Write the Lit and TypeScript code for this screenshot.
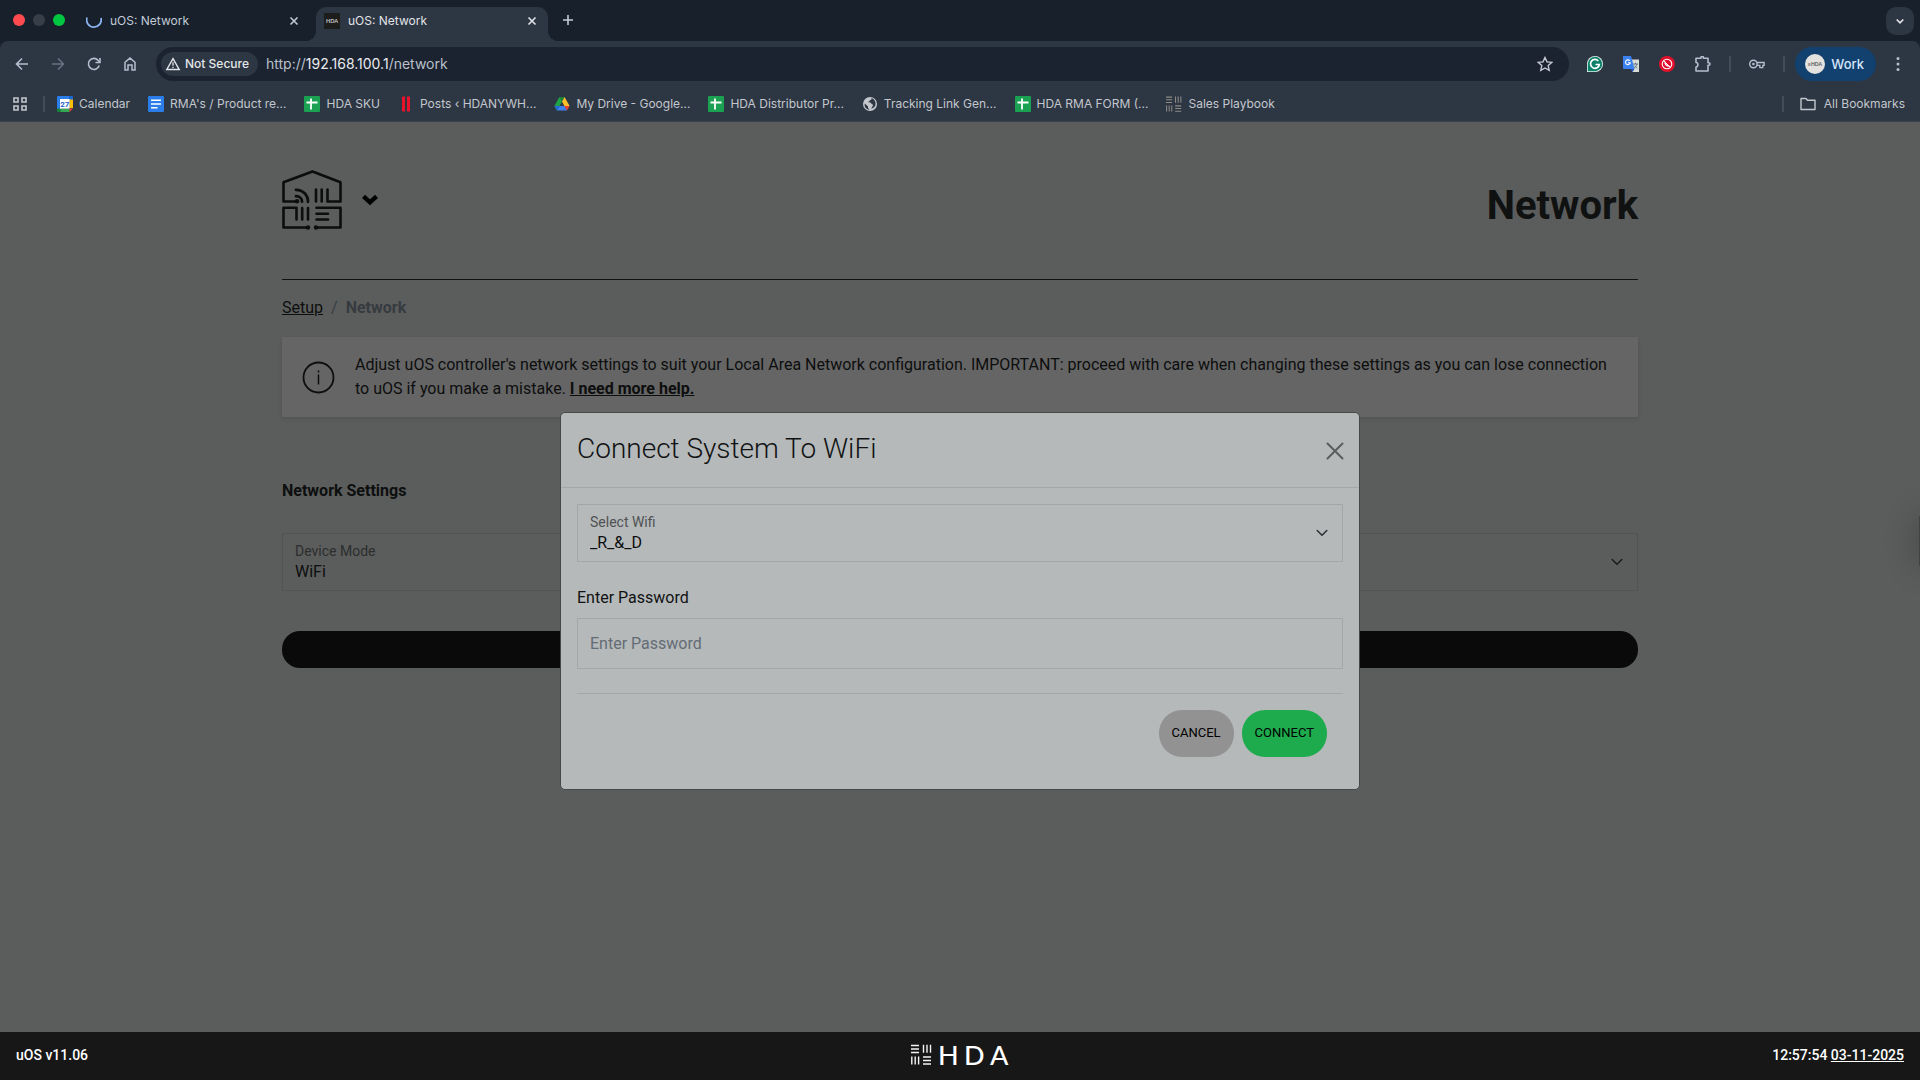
import { LitElement, html, css, svg } from "lit";
import { customElement, state } from "lit/decorators.js";

const sheetIcon = html`<svg class="ico" viewBox="0 0 16 16" aria-hidden="true">
  <rect width="16" height="16" rx="1" fill="#1ba152"/>
  <path d="M7 2.500v11M2.500 6.500h11" stroke="#fff" stroke-width="1.800"/>
</svg>`;

const barsMark = (color: string) => svg`
  <g stroke=${color} stroke-width="1.400" fill="none">
    <path d="M0 1.500h8M0 5h8M0 8.500h8"/>
    <path d="M12.500 .8v8M16 .8v8M19.500 .8v8"/>
    <path d="M.8 12.500v8M4.200 12.500v8M7.600 12.500v8"/>
    <path d="M12 13h8M12 16.500h8M12 20h8"/>
  </g>`;

const calendarIcon = html`<svg class="ico" viewBox="0 0 16 16" aria-hidden="true">
  <path d="M1 0h11v4H4v9H0V1a1 1 0 0 1 1-1z" fill="#2b7de9"/>
  <path d="M12 0h3a1 1 0 0 1 1 1v3h-4z" fill="#1967d2"/>
  <path d="M12.500 3.500H16V12h-3.500z" fill="#fbbc04"/>
  <path d="M3 12.500h9.500V16H4a1 1 0 0 1-1-1z" fill="#34a853"/>
  <path d="M0 12.500h3.500V16H1a1 1 0 0 1-1-1z" fill="#188038"/>
  <path d="M12.500 12.500H16L12.500 16z" fill="#ea4335"/>
  <rect x="3" y="3" width="9.600" height="9.600" fill="#fff"/>
  <text x="7.800" y="10.600" text-anchor="middle" font-family="Roboto, sans-serif" font-size="8" font-weight="700" fill="#1a5fc8">27</text>
</svg>`;

const docIcon = html`<svg class="ico" viewBox="0 0 16 16" aria-hidden="true">
  <rect width="16" height="16" rx="1" fill="#2b7de9"/>
  <path d="M3 4.300h10M3 8h10M3 11.700h6.500" stroke="#fff" stroke-width="1.600"/>
</svg>`;

const pauseIcon = html`<svg class="ico" viewBox="0 0 16 16" aria-hidden="true">
  <path d="M5.500 .5v15M10.500 .5v15" stroke="#e8132b" stroke-width="3"/>
</svg>`;

const driveIcon = html`<svg class="ico" viewBox="0 0 16 16" aria-hidden="true">
  <path d="M5.400 1h5.200L8 5.500z" fill="#188038"/>
  <path d="M5.400 1L8 5.500 3 14.500.4 10z" fill="#1ea446"/>
  <path d="M10.600 1L15.600 10h-5.200L8 5.500z" fill="#fcbf2a"/>
  <path d="M5.600 10h4.800l2.600 4.500H3z" fill="#3b82f0"/>
  <path d="M10.400 10h5.200L13 14.500z" fill="#ea4335"/>
  <path d="M.4 10h5.200L3 14.500z" fill="#2567d8"/>
</svg>`;

const globeIcon = html`<svg class="ico" viewBox="0 0 16 16" aria-hidden="true">
  <circle cx="8" cy="8" r="7" fill="#c4c7cb"/>
  <path d="M2.800 7.500L6 10.500v1.500l1.500 1.800C4 13.500 2 10.500 2.800 7.500zM9.500 2c.5 1.200-.5 2-1.600 2.200C7.500 5.500 6.500 5.500 6 6.300c1.500 0 3.200.2 3.500 1.700 1.500.3 1.800 1.200 1.200 2.200-.7.800-1.200 1.300-1.200 2.600 3-.8 4.500-3.200 4-6C13 4.300 11.500 2.600 9.500 2z" fill="#2d3643"/>
</svg>`;

const playbookIcon = html`<svg class="ico" viewBox="0 0 21 21" aria-hidden="true">${barsMark("#8d8a86")}</svg>`;

interface Bookmark { label: string; icon: unknown; }

const bookmarks: Bookmark[] = [
  { label: "Calendar", icon: calendarIcon },
  { label: "RMA's / Product re...", icon: docIcon },
  { label: "HDA SKU", icon: sheetIcon },
  { label: "Posts ‹ HDANYWH...", icon: pauseIcon },
  { label: "My Drive - Google...", icon: driveIcon },
  { label: "HDA Distributor Pr...", icon: sheetIcon },
  { label: "Tracking Link Gen...", icon: globeIcon },
  { label: "HDA RMA FORM (...", icon: sheetIcon },
  { label: "Sales Playbook", icon: playbookIcon },
];

const closeGlyph = html`<svg class="ico" viewBox="0 0 16 16" aria-hidden="true">
  <path d="M4.500 4.500l7 7M11.500 4.500l-7 7" stroke="currentColor" stroke-width="1.600" fill="none"/>
</svg>`;

@customElement("browser-chrome")
export class BrowserChrome extends LitElement {
  static styles = css`
    :host { display: block; background: #17202b; color: #c3cbd8; font: 12px/16px Inter, "Liberation Sans", sans-serif; }
    button { font: inherit; color: inherit; background: none; border: 0; padding: 0; display: grid; place-items: center; cursor: pointer; }
    a { color: inherit; text-decoration: none; }
    svg { display: block; }
    .ico { width: 16px; height: 16px; flex: none; }
    .tabs { display: flex; align-items: end; height: 41px; padding: 0 6px 0 13px; box-sizing: border-box; }
    .lights { display: flex; gap: 8px; height: 42px; align-items: center; padding-right: 13px; }
    .light { width: 12px; height: 12px; border-radius: 50%; background: #383e48; }
    .light.red { background: #ff4b50; }
    .light.green { background: #00c640; }
    .tab { display: flex; align-items: center; gap: 8px; width: 232px; height: 34px; box-sizing: border-box; padding: 0 8px 7px; }
    .tab .name { flex: 1; white-space: nowrap; }
    .tab.active { position: relative; background: #2d3643; color: #e2e4e8; border-radius: 10px 10px 0 0; margin-left: 6px; }
    .tab.active::before, .tab.active::after { content: ""; position: absolute; bottom: 0; width: 10px; height: 10px; }
    .tab.active::before { right: 100%; background: radial-gradient(circle at 0 0, transparent 10px, #2d3643 10px); }
    .tab.active::after { left: 100%; background: radial-gradient(circle at 100% 0, transparent 10px, #2d3643 10px); }
    .new { margin-left: 12px; height: 42px; }
    .grow { flex: 1; }
    .search-tabs { width: 28px; height: 28px; border-radius: 10px; background: #2d3643; color: #e2e4e8; margin-bottom: 6px; }
    .panel { background: #2d3643; border-radius: 8px 8px 0 0; }
    .bar { display: flex; align-items: center; height: 46px; box-sizing: border-box; padding: 0 14px 0 12px; }
    .nav { display: flex; align-items: center; gap: 16px; padding: 0 16px 0 0; color: #b4bfce; }
    .nav .ico { width: 20px; height: 20px; }
    .nav .off { color: #687180; }
    .omnibox { flex: 1; display: flex; align-items: center; height: 34px; box-sizing: border-box; border-radius: 17px; background: #1b2230; padding: 0 16px 0 5px; }
    .chip { height: 24px; border-radius: 12px; background: #2d3643; color: #e4e6ea; display: flex; align-items: center; gap: 4px; padding: 0 9px 0 4px; font-weight: 500; }
    .url-text { flex: 1; margin-left: 8px; font-size: 14px; line-height: 20px; color: #b9c0ca; }
    .url-text b { font-weight: 400; color: #e8eaed; }
    .exts { display: flex; align-items: center; gap: 20px; padding-left: 18px; color: #b4bfce; }
    .sep { width: 2px; height: 16px; background: #434c5a; flex: none; }
    .exts .sep { margin: 0 -2px; }
    .work { height: 34px; border-radius: 17px; background: #12416f; color: #d6e5fb; display: flex; align-items: center; gap: 6px; padding: 0 12px 0 10px; font-size: 13px; font-weight: 500; margin-left: 12px; }
    .menu { margin-left: 14px; color: #b4bfce; }
    .marks { display: flex; align-items: center; height: 34px; padding: 0 15px 0 12px; color: #c3c7cd; border-bottom: 1px solid #3a414b; }
    .list { display: flex; gap: 18px; list-style: none; margin: 0; padding: 0 0 0 12px; flex: 1; }
    .marks .sep { margin-left: 15px; }
    .mark { display: flex; align-items: center; gap: 6px; white-space: nowrap; }
    .all { gap: 8px; display: flex; align-items: center; margin-left: 16px; }
  `;

  render() {
    return html`
      <div class="tabs">
        <div class="lights"><span class="light red"></span><span class="light"></span><span class="light green"></span></div>
        <div class="tab">
          <svg class="ico" viewBox="0 0 16 16" aria-hidden="true"><path d="M1 4.500A7.300 7.300 0 1 0 15 5" fill="none" stroke="#8ab4f0" stroke-width="1.800"/></svg>
          <span class="name">uOS: Network</span>
          <button aria-label="Close tab">${closeGlyph}</button>
        </div>
        <div class="tab active">
          <svg class="ico" viewBox="0 0 16 16" aria-hidden="true"><rect width="16" height="16" fill="#1d1d1d"/><text x="8" y="10" text-anchor="middle" font-family="Lato, sans-serif" font-size="5.500" font-weight="700" fill="#c9c9c9">HDA</text></svg>
          <span class="name">uOS: Network</span>
          <button aria-label="Close tab">${closeGlyph}</button>
        </div>
        <button class="new" aria-label="New tab"><svg class="ico" viewBox="0 0 16 16"><path d="M8 3v10M3 8h10" stroke="currentColor" stroke-width="1.600"/></svg></button>
        <span class="grow"></span>
        <button class="search-tabs" aria-label="Search tabs"><svg class="ico" viewBox="0 0 16 16"><path d="M4.700 6.500L8 9.800l3.300-3.300" fill="none" stroke="currentColor" stroke-width="1.700"/></svg></button>
      </div>
      <div class="panel">
        <div class="bar">
          <nav class="nav">
            <button aria-label="Back"><svg class="ico" viewBox="0 0 20 20"><path d="M16 10H4.500M10 4.500L4.500 10l5.500 5.500" fill="none" stroke="currentColor" stroke-width="1.600"/></svg></button>
            <button class="off" aria-label="Forward"><svg class="ico" viewBox="0 0 20 20"><path d="M4 10h11.500M10 4.500l5.500 5.500-5.500 5.500" fill="none" stroke="currentColor" stroke-width="1.600"/></svg></button>
            <button aria-label="Reload"><svg class="ico" viewBox="0 0 20 20"><path d="M15.200 11.500A5.500 5.500 0 1 1 14 6.200L15.500 8" fill="none" stroke="currentColor" stroke-width="1.600"/><path d="M16 4v4.500h-4.500" fill="none" stroke="currentColor" stroke-width="1.600"/></svg></button>
            <button aria-label="Home"><svg class="ico" viewBox="0 0 20 20"><path d="M5 16V8.300l5-4.200 5 4.200V16h-3v-5H8v5z" fill="none" stroke="currentColor" stroke-width="1.500"/></svg></button>
          </nav>
          <div class="omnibox">
            <button class="chip"><svg class="ico" viewBox="0 0 16 16" aria-hidden="true"><path d="M8 2.700L14.200 13.500H1.800z" fill="none" stroke="currentColor" stroke-width="1.400"/><path d="M8 6.200v3.600M8 10.700v1.400" stroke="currentColor" stroke-width="1.300"/></svg>Not Secure</button>
            <span class="url-text" role="textbox" aria-label="Address">http://<b>192.168.100.1</b>/network</span>
            <button aria-label="Bookmark this page"><svg class="ico" viewBox="0 0 16 16"><path d="M8 1.500l2 4.400 4.700.5-3.500 3.200 1 4.800L8 12l-4.200 2.400 1-4.800L1.300 6.400 6 5.900z" fill="none" stroke="#c3c9d2" stroke-width="1.400"/></svg></button>
          </div>
          <div class="exts">
            <button aria-label="Grammarly"><svg class="ico" viewBox="0 0 16 16"><path d="M8 0a8 8 0 0 1 0 16H0V8a8 8 0 0 1 8-8z" fill="#e8f3ef"/><path d="M8 .8a7.200 7.200 0 0 1 0 14.400H.8V8A7.200 7.200 0 0 1 8 .8z" fill="#0c8068"/><path d="M11.300 5A4.400 4.400 0 1 0 12.300 8.500H8.500" fill="none" stroke="#fff" stroke-width="1.700"/></svg></button>
            <button aria-label="Translate"><svg class="ico" viewBox="0 0 16 16"><path d="M6 3.500h10V16H9.500z" fill="#d9dcd8"/><path d="M10 8h5M12.500 6.800V8M14 8c-.5 2-2 3.500-3.500 4.500M11.300 9.500l3 3" fill="none" stroke="#5c7280" stroke-width="1"/><path d="M0 0h8l3.500 13H1a1 1 0 0 1-1-1z" fill="#3b82f0"/><path d="M7.500 13h4l-2 3z" fill="#2a4fb8"/><path d="M6.800 4.700A2.400 2.400 0 1 0 7.300 6.700H5" fill="none" stroke="#fff" stroke-width="1.100"/></svg></button>
            <button aria-label="Call blocker"><svg class="ico" viewBox="0 0 16 16"><circle cx="8" cy="8" r="8" fill="#e0102c"/><circle cx="8" cy="8" r="4.800" fill="none" stroke="#fff" stroke-width="1.100"/><path d="M4.600 4.600l6.800 6.800" stroke="#fff" stroke-width="1"/><path d="M6 5.700c0 2.600 1.700 4.300 4.300 4.400" fill="none" stroke="#fff" stroke-width="1.300"/></svg></button>
            <button aria-label="Extensions"><svg class="ico" viewBox="0 0 16 16"><path d="M1 2.200h5V1.500a1 1 0 0 1 2.400 0v.7h4.600v4.600h.8a1.200 1.200 0 0 1 0 2.400H13V15H1v-4c2.500 0 2.500-4.500 0-4.500z" fill="none" stroke="currentColor" stroke-width="1.600" stroke-linejoin="round"/></svg></button>
            <span class="sep"></span>
            <button aria-label="Passwords"><svg class="ico" viewBox="0 0 18 16"><path d="M8.700 6.300H17v3.200h-1.500V12h-3.300V9.500H8.700" fill="none" stroke="currentColor" stroke-width="1.500"/><circle cx="5" cy="8" r="4.200" fill="none" stroke="currentColor" stroke-width="1.600"/><circle cx="5" cy="8" r="1.500" fill="currentColor"/></svg></button>
            <span class="sep"></span>
          </div>
          <button class="work"><svg width="20" height="20" viewBox="0 0 20 20" aria-hidden="true"><circle cx="10" cy="10" r="10" fill="#e4e2de"/><text x="10" y="12" text-anchor="middle" font-family="Lato, sans-serif" font-size="5" font-weight="700" fill="#555">≡HDA</text></svg>Work</button>
          <button class="menu" aria-label="Menu"><svg class="ico" viewBox="0 0 16 16"><g fill="currentColor"><circle cx="8" cy="2.600" r="1.500"/><circle cx="8" cy="8" r="1.500"/><circle cx="8" cy="13.400" r="1.500"/></g></svg></button>
        </div>
        <div class="marks">
          <button aria-label="Apps"><svg class="ico" viewBox="0 0 16 16"><path d="M2 2h4v4H2zM10 2h4v4h-4zM2 10h4v4H2zM10 10h4v4h-4z" fill="none" stroke="currentColor" stroke-width="1.600"/></svg></button>
          <span class="sep"></span>
          <ul class="list">${bookmarks.map(b => html`<li><a class="mark" href="#">${b.icon}<span>${b.label}</span></a></li>`)}</ul>
          <span class="sep"></span>
          <button class="all"><svg class="ico" viewBox="0 0 16 16" aria-hidden="true"><path d="M1 13.500v-11h5l1.500 1.800H15v9.200z" fill="none" stroke="currentColor" stroke-width="1.400" stroke-linejoin="round"/></svg>All Bookmarks</button>
        </div>
      </div>`;
  }
}

const fieldStyles = css`
  .field { display: grid; align-items: center; }
  .field > * { grid-area: 1 / 1; }
  .field .caption { align-self: start; padding: 9px 13px; font-size: 14px; line-height: 18px; pointer-events: none; }
  .field .caret { justify-self: end; margin-right: 15px; pointer-events: none; }
  .pick { appearance: none; width: 100%; height: 58px; box-sizing: border-box; margin: 0; padding: 26px 40px 6px 12px; font: inherit; line-height: 24px; background: none; border-radius: 0; outline: 0; }
`;

const caret = html`<svg class="caret" width="12" height="8" viewBox="0 0 12 8" aria-hidden="true"><path d="M1.200 1.500L6 6.300l4.800-4.800" fill="none" stroke="currentColor" stroke-width="1.500" stroke-linecap="round" stroke-linejoin="round"/></svg>`;

@customElement("wifi-dialog")
export class WifiDialog extends LitElement {
  static styles = [fieldStyles, css`
    :host { display: block; width: 100%; max-width: 800px; }
    .modal { position: static; width: auto; margin: 0; padding: 0; border: 1px solid #474948; border-radius: 5px; background: #b5b9ba; color: #111213; font: 16px/24px Roboto, sans-serif; }
    .head { display: flex; align-items: center; justify-content: space-between; padding: 17px 15px 16px 16px; border-bottom: 1px solid #a3a7a8; }
    .title { margin: 0 0 3px; font-size: 28px; line-height: 38px; font-weight: 300; }
    .close { background: none; border: 0; padding: 0; color: #5b5d5e; cursor: pointer; }
    .close svg { display: block; }
    .body { padding: 16px 16px 32px; }
    .body .caption { color: #4f5254; }
    .pick { border: 1px solid #a3a7a8; color: #0d0e0f; }
    .caret { color: #2b2e31; }
    .pass-label { display: block; margin: 24px 0 8px; }
    .pass { display: block; width: 100%; height: 51px; box-sizing: border-box; border: 1px solid #a3a7a8; background: none; padding: 0 12px; font: inherit; border-radius: 0; outline: 0; }
    .pass::placeholder { color: #636c74; opacity: 1; }
    .actions { display: flex; justify-content: end; gap: 8px; margin-top: 24px; padding: 16px 16px 0; border-top: 1px solid #a3a7a8; }
    .btn { height: 47px; border: 0; border-radius: 23px; padding: 0 13px 2px; font: 400 13px/20px Roboto, sans-serif; color: #000; cursor: pointer; }
    .btn.cancel { background: #929292; }
    .btn.go { background: #1eab4d; }
  `];

  @state() private password = "";

  render() {
    return html`
      <dialog class="modal" open aria-labelledby="title">
        <div class="head">
          <h2 class="title" id="title">Connect System To WiFi</h2>
          <button class="close" aria-label="Close"><svg width="18" height="18" viewBox="0 0 18 18"><path d="M1.500 1.500l15 15M16.500 1.500l-15 15" stroke="currentColor" stroke-width="2" stroke-linecap="round"/></svg></button>
        </div>
        <form class="body" @submit=${(e: Event) => e.preventDefault()}>
          <div class="field">
            <select class="pick" id="wifi"><option>_R_&amp;_D</option></select>
            <label class="caption" for="wifi">Select Wifi</label>
            ${caret}
          </div>
          <label class="pass-label" for="pass">Enter Password</label>
          <input class="pass" id="pass" type="password" placeholder="Enter Password" .value=${this.password}
            @input=${(e: Event) => (this.password = (e.target as HTMLInputElement).value)}>
          <div class="actions">
            <button class="btn cancel" type="button">CANCEL</button>
            <button class="btn go" type="submit">CONNECT</button>
          </div>
        </form>
      </dialog>`;
  }
}

@customElement("app-root")
export class AppRoot extends LitElement {
  static styles = [fieldStyles, css`
    :host { display: flex; flex-direction: column; min-height: 100vh; font: 16px/24px Roboto, sans-serif; color: #0d0e0e; }
    a { color: inherit; }
    svg { display: block; flex: none; }
    .view { flex: 1; position: relative; display: flex; flex-direction: column; background: #5b5d5c; overflow: hidden; }
    .main { flex: 1; width: 100%; max-width: 1380px; box-sizing: border-box; margin: 0 auto; padding: 48px 12px; }
    .top { display: flex; justify-content: space-between; align-items: end; padding-bottom: 49px; border-bottom: 1px solid #101111; }
    .brand { display: flex; align-items: center; gap: 18px; background: none; border: 0; padding: 0; color: #0c0d0d; cursor: pointer; }
    .title { margin: 0; font-size: 40px; line-height: 48px; font-weight: 700; color: #101111; }
    .crumbs { display: flex; gap: 8px; margin-top: 16px; color: #363b40; }
    .crumbs a { color: #0d0e0e; }
    .info { display: flex; align-items: center; gap: 20px; margin-top: 17px; padding: 16px 20px; background: #656565; box-shadow: 0 2px 4px rgba(0, 0, 0, .1); }
    .info p { margin: 0; }
    .section { margin: 62px 0 30px; font-size: 16px; line-height: 24px; font-weight: 700; }
    .caption { color: #2c2e2f; }
    .pick { border: 1px solid #525453; color: #0d0e0e; }
    .caret { color: #191b1c; }
    .apply { display: block; width: 100%; height: 37px; margin-top: 40px; border: 0; border-radius: 18px; background: #0a0a0a; cursor: pointer; }
    .overlay { position: absolute; inset: 0 0 -48px; display: grid; place-items: center; }
    .drawer { position: absolute; top: 394px; left: calc(100% - 1px); width: 20px; height: 50px; background: #404243; box-shadow: 0 0 32px rgba(0, 0, 0, .3); }
    .foot { display: grid; grid-template-columns: 1fr auto 1fr; align-items: center; height: 48px; box-sizing: border-box; padding: 0 16px 2px; background: #171717; color: #fff; font-size: 14px; font-weight: 500; line-height: 20px; position: relative; }
    .logo { overflow: visible; }
    .clock { text-align: right; }
  `];

  render() {
    return html`
      <browser-chrome></browser-chrome>
      <div class="view">
        <main class="main">
          <header class="top">
            <button class="brand" aria-label="Open menu">
              <svg width="60" height="60" viewBox="0 0 60 60" fill="none" stroke="currentColor" stroke-width="2.600" stroke-linecap="round" stroke-linejoin="round" aria-hidden="true">
                <path d="M15.500 31.500H1.500V12.300L30.500 1.500 58.500 12.300V31.500H45.500V19.500"/>
                <path d="M34 19.500v12M39.700 19.500v12"/>
                <path d="M14 19.800c7 0 12 5 12 12M14 26.200c3.500 0 6 2.500 6 5.500" stroke-width="2.800"/>
                <path d="M26 57.500H1.500V37.800H14.500V49.500M20.200 38v11.500M26 38v11.500"/>
                <path d="M34 57.500H58.500V37.800H34.500M34.500 43.700h11.500M34.500 49.500h11.500"/>
                <g fill="currentColor" stroke="none"><circle cx="26" cy="57.500" r="2.200"/><circle cx="34" cy="57.500" r="2.200"/><circle cx="15" cy="31.300" r="2.200"/></g>
              </svg>
              <svg width="20" height="12" viewBox="0 0 20 12" aria-hidden="true"><path d="M3.500 2.300l6.500 6 6.500-6" fill="none" stroke="#000" stroke-width="4.400"/></svg>
            </button>
            <h1 class="title">Network</h1>
          </header>
          <nav class="crumbs" aria-label="Breadcrumb"><a href="#">Setup</a><span>/</span><b>Network</b></nav>
          <section class="info">
            <svg width="33" height="33" viewBox="0 0 33 33" fill="none" stroke="#0d0e0e" stroke-width="1.800" aria-hidden="true"><circle cx="16.500" cy="16.500" r="15"/><path d="M16.500 13.500v10" stroke-width="1.500"/><path d="M16.500 9.500v2" stroke-width="1.500"/></svg>
            <p>Adjust uOS controller's network settings to suit your Local Area Network configuration. IMPORTANT: proceed with care when changing these settings as you can lose connection to uOS if you make a mistake. <a href="#"><b>I need more help.</b></a></p>
          </section>
          <h2 class="section">Network Settings</h2>
          <div class="field">
            <select class="pick" id="mode"><option>WiFi</option></select>
            <label class="caption" for="mode">Device Mode</label>
            ${caret}
          </div>
          <button class="apply" aria-label="Apply"></button>
        </main>
        <div class="drawer"></div>
        <div class="overlay"><wifi-dialog></wifi-dialog></div>
      </div>
      <footer class="foot">
        <span>uOS v11.06</span>
        <svg class="logo" width="98" height="22" viewBox="0 0 98 22" role="img" aria-label="HDA">
          ${barsMark("#f4f4f4")}
          <text x="27 53 79" y="21" font-family="Lato, sans-serif" font-size="27" fill="#fff">HDA</text>
        </svg>
        <span class="clock">12:57:54 <a href="#">03-11-2025</a></span>
      </footer>`;
  }
}
